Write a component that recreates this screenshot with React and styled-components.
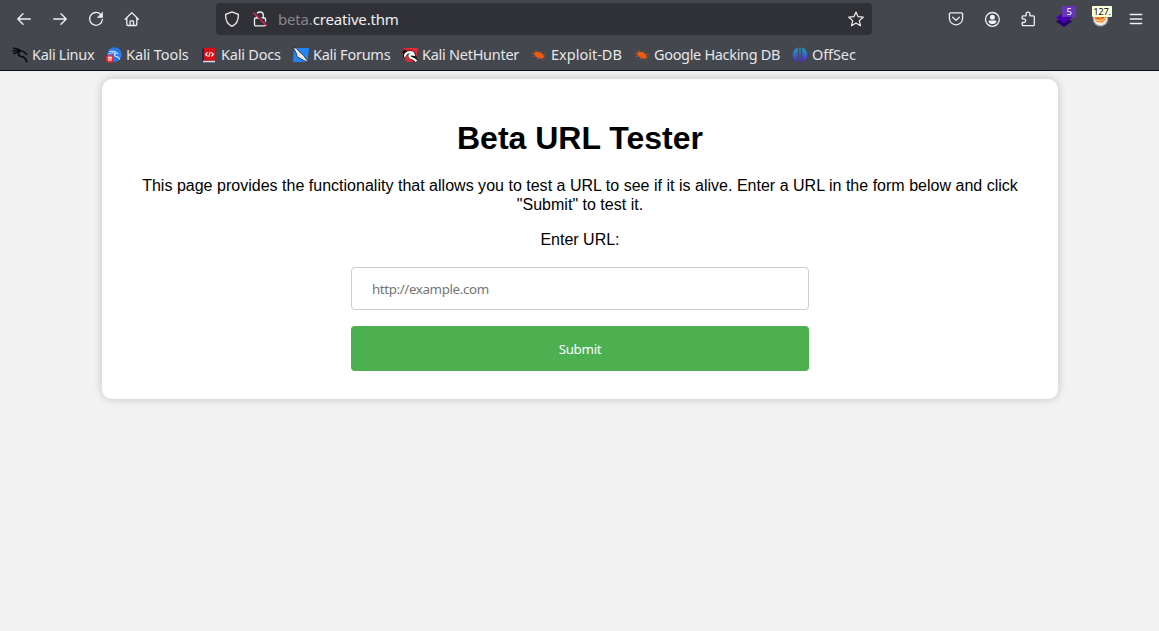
import React from "react";
import styled, { createGlobalStyle } from "styled-components";

const GlobalStyle = createGlobalStyle`
  * { box-sizing: border-box; }
  body { margin: 0; background: #f2f2f2; font-family: "Liberation Sans", Arial, sans-serif; color: #000; }
  svg { display: block; flex: none; }
`;
const Page = styled.div`
  height: 631px;
  display: flex;
  flex-direction: column;
  overflow: hidden;
`;
const Chrome = styled.header`
  flex: none;
  height: 71px;
  background: #44474e;
  border-bottom: 1px solid #0c0c13;
  color: #f0f0f3;
  font-family: "Noto Sans", sans-serif;
`;
const NavBar = styled.div`
  display: flex;
  align-items: center;
  height: 38px;
  padding: 0 15px 0 16px;
`;
const ButtonGroup = styled.div`
  display: flex;
  gap: 20px;
`;
const IconButton = styled.button`
  position: relative;
  width: 16px;
  height: 16px;
  padding: 0;
  border: 0;
  background: none;
  color: inherit;
`;
const AddressBar = styled.div`
  display: flex;
  align-items: center;
  width: 656px;
  height: 32px;
  margin: 0 76px 0 76px;
  padding: 0 8px;
  border-radius: 4px;
  background: #303136;
`;
const SiteIcons = styled.div`
  display: flex;
  gap: 12px;
  width: 54px;
`;
const Address = styled.span`
  flex: 1;
  font-size: 15px;
  line-height: 20px;
  letter-spacing: -0.17px;
`;
const Muted = styled.span`
  color: #85868c;
`;
const Badge = styled.span`
  position: absolute;
  top: ${(p) => p.$top}px;
  left: ${(p) => p.$left}px;
  width: ${(p) => p.$width}px;
  height: 11px;
  border-radius: 1px;
  background: ${(p) => p.$bg};
  color: ${(p) => p.$color};
  font: 9.5px/11px "Noto Sans", sans-serif;
  letter-spacing: -0.3px;
  text-align: center;
`;
const BookmarkBar = styled.nav`
  display: flex;
  align-items: center;
  gap: 12px;
  height: 32px;
  padding: 1px 12px 0;
`;
const Bookmark = styled.a`
  display: flex;
  align-items: center;
  gap: 4px;
`;
const BookmarkLabel = styled.span`
  width: ${(p) => p.$width}px;
  margin-top: -2px;
  font-size: 14.5px;
  line-height: 20px;
  letter-spacing: ${(p) => p.$track}px;
  white-space: nowrap;
  color: #e6e6e9;
`;
const Card = styled.main`
  width: 956px;
  height: 320px;
  margin: 8px 0 0 102px;
  padding: 20px;
  border-radius: 10px;
  background: #fff;
  box-shadow: 0 0 10px rgba(0, 0, 0, 0.2);
  text-align: center;
`;
const Title = styled.h1`
  margin: 21px 0 19px;
  font-size: 32px;
  line-height: 37px;
`;
const Text = styled.p`
  margin: 0 0 16px;
  font-size: 16px;
  line-height: 19px;
  letter-spacing: 0.014px;
`;
const Form = styled.form`
  display: flex;
  flex-direction: column;
  align-items: center;
`;
const Label = styled.label`
  margin-bottom: 18px;
  font-size: 16px;
  line-height: 19px;
`;
const UrlInput = styled.input`
  width: 458px;
  height: 43px;
  margin-bottom: 16px;
  padding: 1px 20px 0;
  border: 1px solid #ccc;
  border-radius: 4px;
  font: 13.33px "Noto Sans", sans-serif;
  letter-spacing: -0.37px;
  &::placeholder { color: #757575; opacity: 1; }
`;
const Submit = styled.button`
  width: 458px;
  height: 45px;
  padding: 0;
  border: 0;
  border-radius: 4px;
  background: #4caf50;
  color: #fff;
  font: 13.33px "Noto Sans", sans-serif;
  letter-spacing: -0.3px;
`;

const Line = ({ children, w = 1.3 }) => (
  <svg width="16" height="16" viewBox="0 0 16 16" fill="none" stroke="currentColor" strokeWidth={w} strokeLinecap="round" strokeLinejoin="round">
    {children}
  </svg>
);
const Art = ({ children }) => <svg width="16" height="16" viewBox="0 0 16 16">{children}</svg>;

const Back = () => <Line w={1.4}><path d="M14.3 8H1.8M7 2.8 1.8 8 7 13.2" /></Line>;
const Forward = () => <Line w={1.4}><path d="M1.7 8h12.5M9 2.8 14.2 8 9 13.2" /></Line>;
const Reload = () => (
  <Line><path d="M12.6 3.4A6.4 6.4 0 1 0 14.4 8.5" /><path d="M14.5 1.6v4.8H9.7z" fill="currentColor" strokeWidth=".7" /></Line>
);
const Home = () => (
  <Line><path d="M1.200 8.200 7.800 1.600l6.600 6.600M2.800 6.800v6.600c0 .7.4 1.100 1.100 1.100h7.800c.7 0 1.100-.4 1.100-1.100V6.800M6.100 14.300v-3.700c0-.5.3-.8.8-.8h1.800c.5 0 .8.3.8.8v3.700" /></Line>
);
const Shield = () => <Line><path d="M8 .9 14.3 3.3c.4 5.2-1.2 9.7-6.3 12C2.9 13 1.3 8.5 1.7 3.3z" /></Line>;
const BrokenLock = () => (
  <Line>
    <path d="M4.7 7V4.300a3.300 3.300 0 0 1 6.600 0V7M3.500 7h9c.6 0 1 .4 1 1v5.800c0 .6-.4 1-1 1h-9c-.6 0-1-.4-1-1V8c0-.6.4-1 1-1z" />
    <path d="m2.500 1.300 12 12" stroke="#303136" strokeWidth="2" />
    <path d="m1.500 1.800 13 12.800" stroke="#e22850" strokeWidth="1.400" />
  </Line>
);
const Star = () => <Line w={1.2}><path d="m8 1 2.100 4.700 5.100.5-3.900 3.400 1.200 5.100L8 12l-4.500 2.700 1.200-5.100L.8 6.200l5.100-.5z" /></Line>;
const Pocket = () => <Line><path d="M2.500 1.800h11c.7 0 1.100.4 1.100 1.100v4.300a6.600 6.600 0 0 1-13.200 0V2.900c0-.7.4-1.100 1.100-1.100zM4.700 6.300 8 9.400l3.300-3.100" /></Line>;
const Account = () => (
  <Line><circle cx="8.400" cy="8.400" r="6.900" /><circle cx="8.400" cy="6.200" r="2.500" fill="currentColor" stroke="none" /><path d="M5.400 9.500h6c.6 0 1 .4 1 1 0 1.500-2 2.600-4 2.600s-4-1.100-4-2.600c0-.6.4-1 1-1z" fill="currentColor" stroke="none" /></Line>
);
const Puzzle = () => <Line><path d="M2.200 7.800V5.700c0-.6.3-.9.900-.9h3V3.100a1.900 1.900 0 0 1 3.800 0v1.700h3.500c.6 0 .9.300.9.900v8c0 .6-.3.900-.9.900H3.100c-.6 0-.9-.3-.9-.900v-2.200h1.600a1.800 1.800 0 0 0 0-3.700z" /></Line>;
const Menu = () => <Line w={1.4}><path d="M2.300 3.500h11.400M2.300 8h11.400M2.300 12.500h11.400" /></Line>;
const Layers = () => <Art><path d="M0 10.500 8 5l8 5.500L8 16z" fill="#24006e" /><path d="M0 6.500 8 1l8 5.500-8 5.800z" fill="#4b00b0" /></Art>;
const Fox = () => (
  <Art><circle cx="8.500" cy="7.700" r="7.700" fill="#a9a9a9" /><circle cx="8.500" cy="7.500" r="6.700" fill="#f4eee5" /><path d="M2.500 3h12l-.3 5-4.200 4-5.500-1.300-2-3z" fill="#f28a24" /><path d="m4 9 3.500.4 1.500 2M9.500 10l4-3" stroke="#fff" strokeWidth=".7" fill="none" /><path d="M4.500 7 7 7.700M9.500 7l2.500-.5" stroke="#a5571c" fill="none" /></Art>
);

const LinuxIcon = () => (
  <Art><path d="M.7 1.200c3-.1 6 .5 8.600 2.700M.2 4.200c3-1.200 5.800-.9 8.400 0M1.500 7c1.600-1.700 3.900-2.300 6.400-1.800M8.500 3.900c2.200-.2 4 .8 4.700 2.200l2 1.600" fill="none" stroke="#08080a" strokeWidth="1.300" /><path d="M8.300 4.600c-3 1-2.600 4.400.8 4.800 3.700.3 5 1.900 5.700 6" fill="none" stroke="#08080a" strokeWidth="1.500" /></Art>
);
const ToolsIcon = () => (
  <Art><circle cx="8.500" cy="7.600" r="7.300" fill="#2878f0" /><path d="M3 4.500c4-1.300 7 0 9.300 2.600M2.400 7.200c3-2 5.700-1.500 7-.5-1.800 1.300-.7 2.700 1.300 2.900 1.800.3 2.700 1.200 3 3" fill="none" stroke="#cfe2ff" strokeWidth="1.100" /><circle cx="3.900" cy="11.800" r="4.100" fill="#ed2631" /><path d="M1.800 10.300h4.400M3 10.500v3.600M5 10.500v3.600" stroke="#fff" strokeWidth="1.100" /></Art>
);
const DocsIcon = () => (
  <Art><path d="M1 1.200h12.500V16H2.400L1 14.500z" fill="#202b5d" /><path d="M3 .8h11v13H3z" fill="#d50f18" /><path d="M2 13.800h12v1.600H2z" fill="#ddd" /><path d="m6.600 5.400-2 2 2 2M10.400 5.400l2 2-2 2M9.100 4.900l-1.200 5" fill="none" stroke="#fff" strokeWidth="1.200" /></Art>
);
const ForumsIcon = () => (
  <Art><path d="M1 1h15l-1.500 14H0z" fill="#2383f5" /><path d="M.2.200c2.500.3 4.200 2 6 4.600l4.300 3.700 5.200 7.300-6.500-3.300-4.800-2.800L3 5.500z" fill="#fff" stroke="#222" strokeWidth=".8" /><path d="m4 5.700 5.500 5.200" stroke="#999" strokeWidth=".7" /></Art>
);
const HunterIcon = () => (
  <Art><path d="M2 1h14l-1.600 10L11 15H5L0 6z" fill="#e52836" /><path d="m0 5 3-2.500L5 4l-3 4z" fill="#111" /><path d="M3.200 9.800C1.400 5.500 10.500 2.700 12 8.300c-2-1.300-4.500-.6-3.800 1.300.8 1.600 3.900 1.200 6.200 4.800" fill="none" stroke="#111" strokeWidth="4" /><path d="M3.200 9.600C1.800 5.500 10.300 3.200 11.700 7.600c-3-.8-5.200.5-3.800 2.500 1.600 1.500 4.500 1 6.500 4.300" fill="none" stroke="#fff" strokeWidth="2.300" /></Art>
);
const BugIcon = () => (
  <Art><path d="M3.500 5.800c1.800-2 5-1.200 7.400.8 1.800 1.500 2.400 3.200 1.400 4.500-2.300 1-5.900.2-7.500-1.900-1.300-.8-1.900-2.400-1.300-3.400z" fill="#f05a10" /><path d="m4 6.200-2.500-2M5.800 5.500 4.500 3M9 6l1.500-2M11 7.500l4-.3M12 10l2.500.7M10 11l2.500 2.500M7 11l-1 2M4.500 9l-3 .7M4 7.300.5 6.800" stroke="#b55b2c" strokeWidth=".7" /></Art>
);
const OffSecIcon = () => (
  <Art>
    <defs><linearGradient id="offsec" x1="0" y1="0" x2="0" y2="1"><stop stopColor="#14a9c4" /><stop offset="1" stopColor="#5b22ca" /></linearGradient></defs>
    <path d="M5.700.8v14C2.500 14 .7 11 .7 7.800s1.800-6.100 5-7zM7.300.4h1.400v15H7.300zM10.300.8c3.200.9 5 3.800 5 7s-1.800 6.200-5 7z" fill="url(#offsec)" />
  </Art>
);

const bookmarks = [
  ["Kali Linux", LinuxIcon, 62, -0.3],
  ["Kali Tools", ToolsIcon, 63, -0.1],
  ["Kali Docs", DocsIcon, 60, -0.2],
  ["Kali Forums", ForumsIcon, 77, -0.25],
  ["Kali NetHunter", HunterIcon, 97, -0.27],
  ["Exploit-DB", BugIcon, 71, 0],
  ["Google Hacking DB", BugIcon, 126, -0.33],
  ["OffSec", OffSecIcon, 44, -0.1],
];

export default function App() {
  return (
    <Page>
      <GlobalStyle />
      <Chrome>
        <NavBar>
          <ButtonGroup>
            <IconButton><Back /></IconButton>
            <IconButton><Forward /></IconButton>
            <IconButton><Reload /></IconButton>
            <IconButton><Home /></IconButton>
          </ButtonGroup>
          <AddressBar>
            <SiteIcons><Shield /><BrokenLock /></SiteIcons>
            <Address><Muted>beta.</Muted>creative.thm</Address>
            <Star />
          </AddressBar>
          <ButtonGroup>
            <IconButton><Pocket /></IconButton>
            <IconButton><Account /></IconButton>
            <IconButton><Puzzle /></IconButton>
            <IconButton><Layers /><Badge $top={-5} $left={6} $width={14} $bg="#6834b9" $color="#fff">5</Badge></IconButton>
            <IconButton><Fox /><Badge $top={-5} $left={0} $width={20} $bg="#ffffdb" $color="#111">127.</Badge></IconButton>
            <IconButton><Menu /></IconButton>
          </ButtonGroup>
        </NavBar>
        <BookmarkBar>
          {bookmarks.map(([name, Icon, width, track]) => (
            <Bookmark key={name}>
              <Icon />
              <BookmarkLabel $width={width} $track={track}>{name}</BookmarkLabel>
            </Bookmark>
          ))}
        </BookmarkBar>
      </Chrome>
      <Card>
        <Title>Beta URL Tester</Title>
        <Text>This page provides the functionality that allows you to test a URL to see if it is alive. Enter a URL in the form below and click "Submit" to test it.</Text>
        <Form>
          <Label htmlFor="url">Enter URL:</Label>
          <UrlInput id="url" placeholder="http://example.com" />
          <Submit type="button">Submit</Submit>
        </Form>
      </Card>
    </Page>
  );
}
